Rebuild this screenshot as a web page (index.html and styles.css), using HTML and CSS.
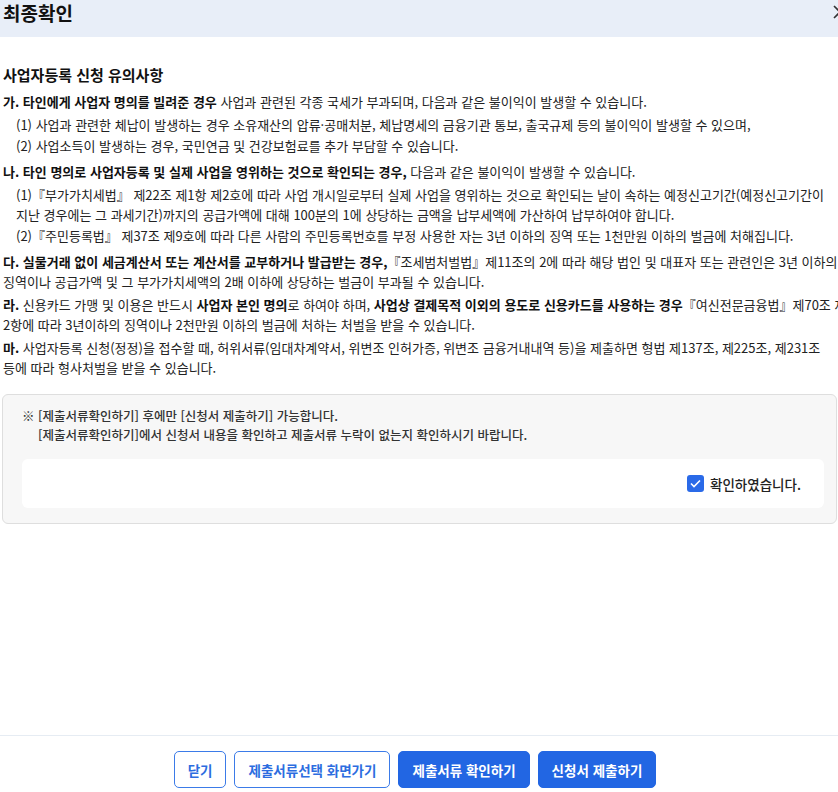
FILE: index.html
```html
<!DOCTYPE html>
<html lang="ko">
<head>
    <meta charset="UTF-8">
    <meta name="viewport" content="width=device-width, initial-scale=1.0">
    <title>최종확인</title>
    <link rel="stylesheet" href="styles.css">
</head>
<body>
    <!-- 최종확인 팝업 -->
    <div class="modal">
        <div class="modal-head">
            <h2>최종확인</h2>
            <button class="close" type="button" aria-label="닫기">
                <svg width="16" height="16" viewBox="0 0 16 16"><path d="M2 2L14 14M14 2L2 14" stroke="#333" stroke-width="1.6" fill="none"/></svg>
            </button>
        </div>

        <div class="modal-body">
            <h3>사업자등록 신청 유의사항</h3>

            <div class="item">
                <p><b>가. 타인에게 사업자 명의를 빌려준 경우</b> 사업과 관련된 각종 국세가 부과되며, 다음과 같은 불이익이 발생할 수 있습니다.</p>
                <ul class="sub">
                    <li>(1) 사업과 관련한 체납이 발생하는 경우 소유재산의 압류·공매처분, 체납명세의 금융기관 통보, 출국규제 등의 불이익이 발생할 수 있으며,</li>
                    <li>(2) 사업소득이 발생하는 경우, 국민연금 및 건강보험료를 추가 부담할 수 있습니다.</li>
                </ul>
            </div>

            <div class="item">
                <p><b>나. 타인 명의로 사업자등록 및 실제 사업을 영위하는 것으로 확인되는 경우,</b> 다음과 같은 불이익이 발생할 수 있습니다.</p>
                <ul class="sub">
                    <li>(1)『부가가치세법』 제22조 제1항 제2호에 따라 사업 개시일로부터 실제 사업을 영위하는 것으로 확인되는 날이 속하는 예정신고기간(예정신고기간이<br>지난 경우에는 그 과세기간)까지의 공급가액에 대해 100분의 1에 상당하는 금액을 납부세액에 가산하여 납부하여야 합니다.</li>
                    <li>(2)『주민등록법』 제37조 제9호에 따라 다른 사람의 주민등록번호를 부정 사용한 자는 3년 이하의 징역 또는 1천만원 이하의 벌금에 처해집니다.</li>
                </ul>
            </div>

            <div class="item">
                <p><b>다. 실물거래 없이 세금계산서 또는 계산서를 교부하거나 발급받는 경우,</b>『조세범처벌법』제11조의 2에 따라 해당 법인 및 대표자 또는 관련인은 3년 이하의<br>징역이나 공급가액 및 그 부가가치세액의 2배 이하에 상당하는 벌금이 부과될 수 있습니다.</p>
            </div>

            <div class="item">
                <p><b>라.</b> 신용카드 가맹 및 이용은 반드시 <b>사업자 본인 명의</b>로 하여야 하며, <b>사업상 결제목적 이외의 용도로 신용카드를 사용하는 경우</b>『여신전문금융법』제70조 제<br>2항에 따라 3년이하의 징역이나 2천만원 이하의 벌금에 처하는 처벌을 받을 수 있습니다.</p>
            </div>

            <div class="item">
                <p><b>마.</b> 사업자등록 신청(정정)을 접수할 때, 허위서류(임대차계약서, 위변조 인허가증, 위변조 금융거내내역 등)을 제출하면 형법 제137조, 제225조, 제231조<br>등에 따라 형사처벌을 받을 수 있습니다.</p>
            </div>

            <div class="confirm-box">
                <p class="notice">※ [제출서류확인하기] 후에만 [신청서 제출하기] 가능합니다.<br><span class="indent">[제출서류확인하기]에서 신청서 내용을 확인하고 제출서류 누락이 없는지 확인하시기 바랍니다.</span></p>
                <div class="check-row">
                    <label class="check">
                        <span class="checkbox">
                            <svg width="11" height="9" viewBox="0 0 11 9"><path d="M1 4.5L4 7.5L10 1.5" stroke="#fff" stroke-width="1.6" fill="none"/></svg>
                        </span>
                        확인하였습니다.
                    </label>
                </div>
            </div>
        </div>

        <div class="modal-foot">
            <button class="btn btn-line" type="button">닫기</button>
            <button class="btn btn-line" type="button">제출서류선택 화면가기</button>
            <button class="btn btn-blue" type="button">제출서류 확인하기</button>
            <button class="btn btn-blue" type="button">신청서 제출하기</button>
        </div>
    </div>
</body>
</html>
```

FILE: styles.css
```css
/* 기본 */
body {
    margin: 0;
    padding: 0;
    font-family: "Noto Sans CJK KR", "Noto Sans", sans-serif;
    color: #222;
    background: #fff;
    overflow: hidden;
}

/* 팝업 */
.modal {
    width: 860px;
    height: 792px;
    display: flex;
    flex-direction: column;
}

.modal-head {
    height: 37px;
    background-color: #e8eef8;
    display: flex;
    justify-content: space-between;
    align-items: flex-start;
    padding-left: 3px;
}

.modal-head h2 {
    margin: 0;
    font-size: 19px;
    line-height: 25px;
    font-weight: 700;
    color: #111;
}

.close {
    border: none;
    background: none;
    padding: 0;
    margin: 4px 12px 0 0;
    width: 16px;
    height: 16px;
}

.modal-body {
    flex: 1;
    padding: 27px 3px 0;
}

.modal-body h3 {
    margin: 0 0 6px;
    font-size: 15px;
    line-height: 22px;
    font-weight: 700;
    color: #111;
}

/* 유의사항 */
.item {
    margin-bottom: 3px;
}

.item p {
    margin: 0;
    font-size: 13px;
    line-height: 20px;
    white-space: nowrap;
}

.item b {
    font-weight: 700;
    color: #111;
}

.sub {
    list-style: none;
    margin: 3px 0 0;
    padding: 0 0 3px 13px;
}

.sub li {
    font-size: 13px;
    line-height: 20px;
    white-space: nowrap;
}

.sub li + li {
    margin-top: 1px;
}

/* 확인 박스 */
.confirm-box {
    margin: 16px 0 0 -1px;
    width: 835px;
    box-sizing: border-box;
    background-color: #f7f7f7;
    border: 1px solid #dedede;
    border-radius: 6px;
    padding: 11px 12px 15px 19px;
}

.notice {
    margin: 0;
    font-size: 12.5px;
    line-height: 19px;
    font-weight: 500;
    color: #333;
}

.notice .indent {
    padding-left: 16px;
}

.check-row {
    margin-top: 15px;
    height: 49px;
    background-color: #fff;
    border-radius: 6px;
    display: flex;
    justify-content: flex-end;
    align-items: center;
    padding-right: 23px;
}

.check {
    display: flex;
    align-items: center;
    gap: 6px;
    font-size: 13.5px;
    font-weight: 500;
    color: #222;
}

.checkbox {
    width: 17px;
    height: 17px;
    border-radius: 3px;
    background-color: #2a6ae8;
    display: flex;
    justify-content: center;
    align-items: center;
}

/* 하단 버튼 */
.modal-foot {
    border-top: 1px solid #e6ecf3;
    height: 57px;
    box-sizing: border-box;
    display: flex;
    justify-content: center;
    align-items: flex-start;
    gap: 8px;
    padding: 15px 30px 0 0;
}

.btn {
    height: 37px;
    padding: 0 13px;
    border-radius: 5px;
    font-family: inherit;
    font-size: 13.5px;
    font-weight: 700;
    cursor: pointer;
}

.btn-line {
    background-color: #fff;
    color: #2c6de0;
    border: 1.5px solid #3b7be8;
}

.btn-blue {
    background-color: #2266e3;
    color: #fff;
    border: 1.5px solid #2266e3;
}
```
